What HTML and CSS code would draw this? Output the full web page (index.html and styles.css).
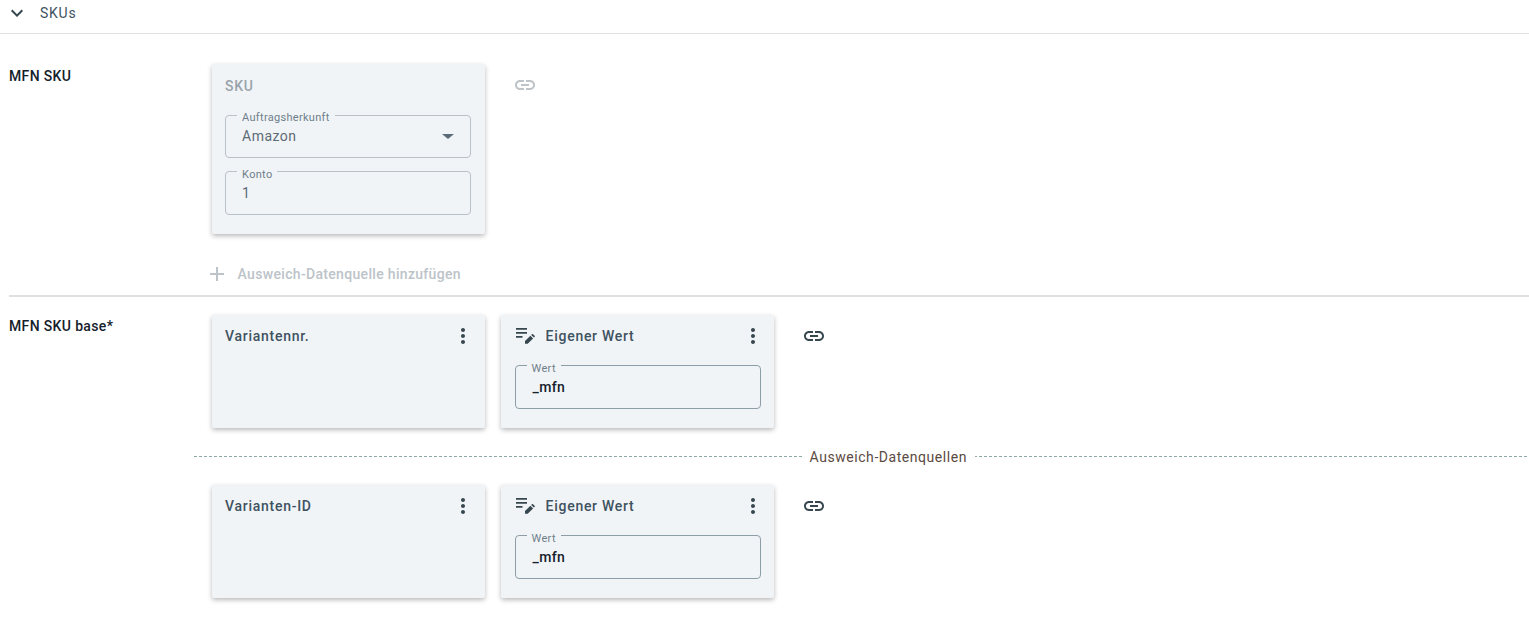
FILE: index.html
```html
<!DOCTYPE html>
<html lang="de">
<head>
  <meta charset="UTF-8">
  <title>SKUs</title>
  <link rel="stylesheet" href="styles.css">
</head>
<body>

  <div class="section-head">
    <svg class="chevron" width="24" height="24" viewBox="0 0 24 24"><path d="M7.41 8.59 12 13.17l4.59-4.58L18 10l-6 6-6-6z"/></svg>
    <span>SKUs</span>
  </div>

  <div class="row row-first">
    <div class="row-label">MFN SKU</div>
    <div class="row-body">
      <div class="cards">
        <div class="card card-tall">
          <div class="card-title muted">SKU</div>
          <div class="field field-select muted-field">
            <span class="field-label">Auftragsherkunft</span>
            <span class="field-value">Amazon</span>
            <span class="caret"></span>
          </div>
          <div class="field muted-field">
            <span class="field-label">Konto</span>
            <span class="field-value">1</span>
          </div>
        </div>
        <svg class="link-icon disabled" width="24" height="24" viewBox="0 0 24 24"><path d="M3.9 12c0-1.71 1.39-3.1 3.1-3.1h4V7H7c-2.76 0-5 2.24-5 5s2.24 5 5 5h4v-1.9H7c-1.71 0-3.1-1.39-3.1-3.1zM8 13h8v-2H8v2zm9-6h-4v1.9h4c1.71 0 3.1 1.39 3.1 3.1s-1.39 3.1-3.1 3.1h-4V17h4c2.76 0 5-2.24 5-5s-2.24-5-5-5z"/></svg>
      </div>
      <div class="add-source">
        <svg width="24" height="24" viewBox="0 0 24 24"><path d="M19 13h-6v6h-2v-6H5v-2h6V5h2v6h6v2z"/></svg>
        <span>Ausweich-Datenquelle hinzufügen</span>
      </div>
    </div>
  </div>

  <div class="row row-second">
    <div class="row-label">MFN SKU base*</div>
    <div class="row-body">
      <div class="cards">
        <div class="card">
          <div class="card-head">
            <div class="card-title">Variantennr.</div>
            <svg class="dots" width="24" height="24" viewBox="0 0 24 24"><path d="M12 8c1.1 0 2-.9 2-2s-.9-2-2-2-2 .9-2 2 .9 2 2 2zm0 2c-1.1 0-2 .9-2 2s.9 2 2 2 2-.9 2-2-.9-2-2-2zm0 6c-1.1 0-2 .9-2 2s.9 2 2 2 2-.9 2-2-.9-2-2-2z"/></svg>
          </div>
        </div>
        <div class="card">
          <div class="card-head">
            <svg class="own-icon" width="20" height="20" viewBox="0 0 20 20"><path d="M1 2h11v1.7H1zM1 6h11v1.7H1zM1 10h6.5v1.7H1zM10 17.8v-2.7l5.4-5.4 2.7 2.7-5.4 5.4zM16.2 8.9l.7-.7c.3-.3.8-.3 1.1 0l1.6 1.6c.3.3.3.8 0 1.1l-.7.7z"/></svg>
            <div class="card-title">Eigener Wert</div>
            <svg class="dots" width="24" height="24" viewBox="0 0 24 24"><path d="M12 8c1.1 0 2-.9 2-2s-.9-2-2-2-2 .9-2 2 .9 2 2 2zm0 2c-1.1 0-2 .9-2 2s.9 2 2 2 2-.9 2-2-.9-2-2-2zm0 6c-1.1 0-2 .9-2 2s.9 2 2 2 2-.9 2-2-.9-2-2-2z"/></svg>
          </div>
          <div class="field">
            <span class="field-label">Wert</span>
            <span class="field-value">_mfn</span>
          </div>
        </div>
        <svg class="link-icon" width="24" height="24" viewBox="0 0 24 24"><path d="M3.9 12c0-1.71 1.39-3.1 3.1-3.1h4V7H7c-2.76 0-5 2.24-5 5s2.24 5 5 5h4v-1.9H7c-1.71 0-3.1-1.39-3.1-3.1zM8 13h8v-2H8v2zm9-6h-4v1.9h4c1.71 0 3.1 1.39 3.1 3.1s-1.39 3.1-3.1 3.1h-4V17h4c2.76 0 5-2.24 5-5s-2.24-5-5-5z"/></svg>
      </div>

      <div class="fallback-divider"><span>Ausweich-Datenquellen</span></div>

      <div class="cards">
        <div class="card">
          <div class="card-head">
            <div class="card-title">Varianten-ID</div>
            <svg class="dots" width="24" height="24" viewBox="0 0 24 24"><path d="M12 8c1.1 0 2-.9 2-2s-.9-2-2-2-2 .9-2 2 .9 2 2 2zm0 2c-1.1 0-2 .9-2 2s.9 2 2 2 2-.9 2-2-.9-2-2-2zm0 6c-1.1 0-2 .9-2 2s.9 2 2 2 2-.9 2-2-.9-2-2-2z"/></svg>
          </div>
        </div>
        <div class="card">
          <div class="card-head">
            <svg class="own-icon" width="20" height="20" viewBox="0 0 20 20"><path d="M1 2h11v1.7H1zM1 6h11v1.7H1zM1 10h6.5v1.7H1zM10 17.8v-2.7l5.4-5.4 2.7 2.7-5.4 5.4zM16.2 8.9l.7-.7c.3-.3.8-.3 1.1 0l1.6 1.6c.3.3.3.8 0 1.1l-.7.7z"/></svg>
            <div class="card-title">Eigener Wert</div>
            <svg class="dots" width="24" height="24" viewBox="0 0 24 24"><path d="M12 8c1.1 0 2-.9 2-2s-.9-2-2-2-2 .9-2 2 .9 2 2 2zm0 2c-1.1 0-2 .9-2 2s.9 2 2 2 2-.9 2-2-.9-2-2-2zm0 6c-1.1 0-2 .9-2 2s.9 2 2 2 2-.9 2-2-.9-2-2-2z"/></svg>
          </div>
          <div class="field">
            <span class="field-label">Wert</span>
            <span class="field-value">_mfn</span>
          </div>
        </div>
        <svg class="link-icon" width="24" height="24" viewBox="0 0 24 24"><path d="M3.9 12c0-1.71 1.39-3.1 3.1-3.1h4V7H7c-2.76 0-5 2.24-5 5s2.24 5 5 5h4v-1.9H7c-1.71 0-3.1-1.39-3.1-3.1zM8 13h8v-2H8v2zm9-6h-4v1.9h4c1.71 0 3.1 1.39 3.1 3.1s-1.39 3.1-3.1 3.1h-4V17h4c2.76 0 5-2.24 5-5s-2.24-5-5-5z"/></svg>
      </div>
    </div>
  </div>

</body>
</html>
```

FILE: styles.css
```css
* {
  box-sizing: border-box;
}

html,
body {
  height: 618px;
  overflow: hidden;
}

body {
  margin: 0;
  background: #ffffff;
  color: #37474f;
  font-family: 'Roboto', 'Liberation Sans', sans-serif;
  font-size: 14px;
}

.section-head {
  display: flex;
  align-items: center;
  height: 34px;
  padding: 0 0 7px 5px;
  border-bottom: 1px solid #e0e0e0;
  letter-spacing: 0.75px;
  color: #3e5261;
}

.section-head span {
  margin-left: 11px;
}

.chevron {
  fill: #37474f;
}

.row {
  display: flex;
  margin-left: 9px;
}

.row-first {
  height: 263px;
  padding-top: 30px;
  border-bottom: 2px solid #e0e0e0;
}

.row-second {
  padding-top: 18px;
}

.row-second .row-label {
  padding-top: 2px;
}

.row-label {
  width: 202.6px;
  flex-shrink: 0;
  padding-top: 3px;
  font-weight: 500;
  letter-spacing: 0.35px;
  line-height: 18px;
  color: #15212b;
}

.row-body {
  flex: 1;
  min-width: 0;
}

.cards {
  display: flex;
  align-items: flex-start;
  gap: 16.5px;
}

.card {
  width: 273px;
  height: 113px;
  padding: 9px 13.5px;
  border-radius: 2px;
  background: #f1f4f7;
  box-shadow: 0 2px 5px rgba(0, 0, 0, 0.28);
}

.card-tall {
  height: 170px;
  padding-top: 12px;
}

.card-head {
  display: flex;
  align-items: center;
  height: 24px;
  margin-bottom: 17px;
}

.card-title {
  flex: 1;
  font-weight: 500;
  letter-spacing: 0.72px;
  color: #3e5261;
}

.card-title.muted {
  height: 20px;
  margin-bottom: 19px;
  line-height: 20px;
  color: #98a3ab;
}

.own-icon {
  flex-shrink: 0;
  margin-right: 11px;
  fill: #37474f;
}

.dots {
  flex-shrink: 0;
  margin-right: -4px;
  fill: #37474f;
}

.field {
  position: relative;
  display: flex;
  align-items: center;
  height: 44px;
  padding: 0 17px 1px;
  border: 1px solid #8d9ea8;
  border-radius: 4px;
}

.field-select {
  height: 43px;
  margin-bottom: 13px;
  justify-content: space-between;
}

.muted-field {
  padding-left: 16px;
  border-color: #b9c2c9;
}

.field-label {
  position: absolute;
  top: -3px;
  left: 11px;
  padding: 0 5px;
  background: #f1f4f7;
  font-size: 11px;
  line-height: 12px;
  letter-spacing: 0.3px;
  color: #6f7f8a;
}

.field-select .field-label {
  top: -4px;
}

.field-value {
  font-weight: 500;
  letter-spacing: 0.3px;
  color: #15212b;
}

.muted-field .field-value {
  font-weight: 400;
  letter-spacing: 0.45px;
  color: #5c6b76;
}

.caret {
  width: 0;
  height: 0;
  margin-right: -1px;
  margin-left: auto;
  border-left: 6px solid transparent;
  border-right: 6px solid transparent;
  border-top: 5px solid #5c6b76;
}

.link-icon {
  margin: 9px 0 0 11.5px;
  fill: #37474f;
}

.link-icon.disabled {
  fill: #bdc3c7;
}

.add-source {
  display: flex;
  align-items: center;
  height: 24px;
  margin: 28px 0 0 -7px;
  color: #bcc3c9;
  font-weight: 500;
  letter-spacing: 0.32px;
}

.add-source svg {
  margin-right: 9px;
  fill: #bcc3c9;
}

.fallback-divider {
  display: flex;
  align-items: center;
  height: 20px;
  margin: 18px 0 19px -18px;
  padding-top: 2px;
  background: repeating-linear-gradient(to right, #8fa9a9 0 3px, transparent 3px 5px) center / 100% 1px no-repeat;
  color: #5b4a3f;
  letter-spacing: 0.55px;
}

.fallback-divider span {
  flex-shrink: 0;
  margin-left: 608px;
  padding: 0 8px;
  background: #ffffff;
}
```
